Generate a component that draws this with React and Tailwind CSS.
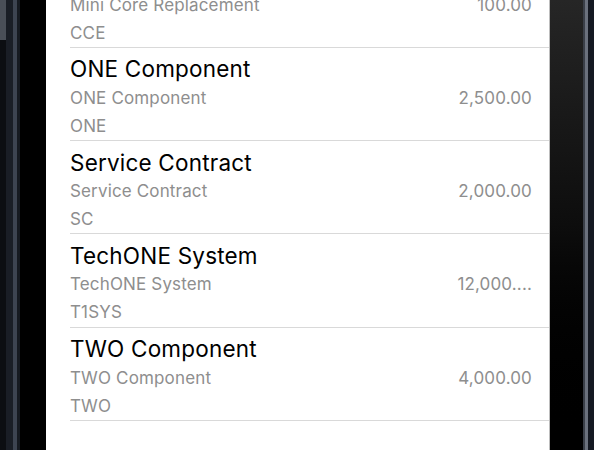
import React from "react";

const items = [
  { title: "Mini Core Replacement", sub: "Mini Core Replacement", code: "CCE", amount: "100.00" },
  { title: "ONE Component", sub: "ONE Component", code: "ONE", amount: "2,500.00" },
  { title: "Service Contract", sub: "Service Contract", code: "SC", amount: "2,000.00" },
  { title: "TechONE System", sub: "TechONE System", code: "T1SYS", amount: "12,000...." },
  { title: "TWO Component", sub: "TWO Component", code: "TWO", amount: "4,000.00" },
];

function Row({ item }) {
  return (
    <div className="h-[93.33px] pl-[24px] shrink-0">
      <div className="h-full border-b border-[#d9d9d9] pr-[17px] pt-[8.5px] flex flex-col">
        <div className="text-[22.5px] leading-[26px] text-black tracking-[0.2px]">{item.title}</div>
        <div className="mt-[5.5px] flex justify-between text-[17px] leading-[21px] text-[#8e8e8e] tracking-[0.15px]">
          <span>{item.sub}</span>
          <span>{item.amount}</span>
        </div>
        <div className="mt-[7px] text-[17px] leading-[21px] text-[#8e8e8e] tracking-[0.15px]">{item.code}</div>
      </div>
    </div>
  );
}

export default function App() {
  return (
    <div className="w-[594px] h-[450px] flex overflow-hidden bg-black" style={{ fontFamily: "Inter, 'Noto Sans', sans-serif" }}>
      {/* left bezel */}
      <div className="w-[46px] flex shrink-0">
        <div className="w-[6px] flex flex-col">
          <div className="h-[40px] bg-[#4a4f58]" />
          <div className="flex-1 bg-[#0c0e12]" />
        </div>
        <div className="w-[7px] bg-[#1a1e26]" />
        <div className="w-[4px] bg-[#3d4451]" />
        <div className="w-[3px] bg-[#161a21]" />
        <div className="flex-1 bg-black" />
      </div>

      {/* screen */}
      <div className="w-[503px] h-full bg-white overflow-hidden shrink-0">
        <div className="-mt-[45.5px] flex flex-col">
          {items.map((it) => (
            <Row key={it.code} item={it} />
          ))}
        </div>
      </div>

      {/* right bezel */}
      <div className="flex-1 flex">
        <div className="w-[1px] bg-[#bdbdbd]" />
        <div className="w-[33px] bg-gradient-to-b from-[#262626] via-[#0d0d0d] to-black" />
        <div className="w-[2px] bg-[#3a3f48]" />
        <div className="w-[3px] bg-[#6b717d]" />
        <div className="flex-1 bg-[#151922]" />
      </div>
    </div>
  );
}
